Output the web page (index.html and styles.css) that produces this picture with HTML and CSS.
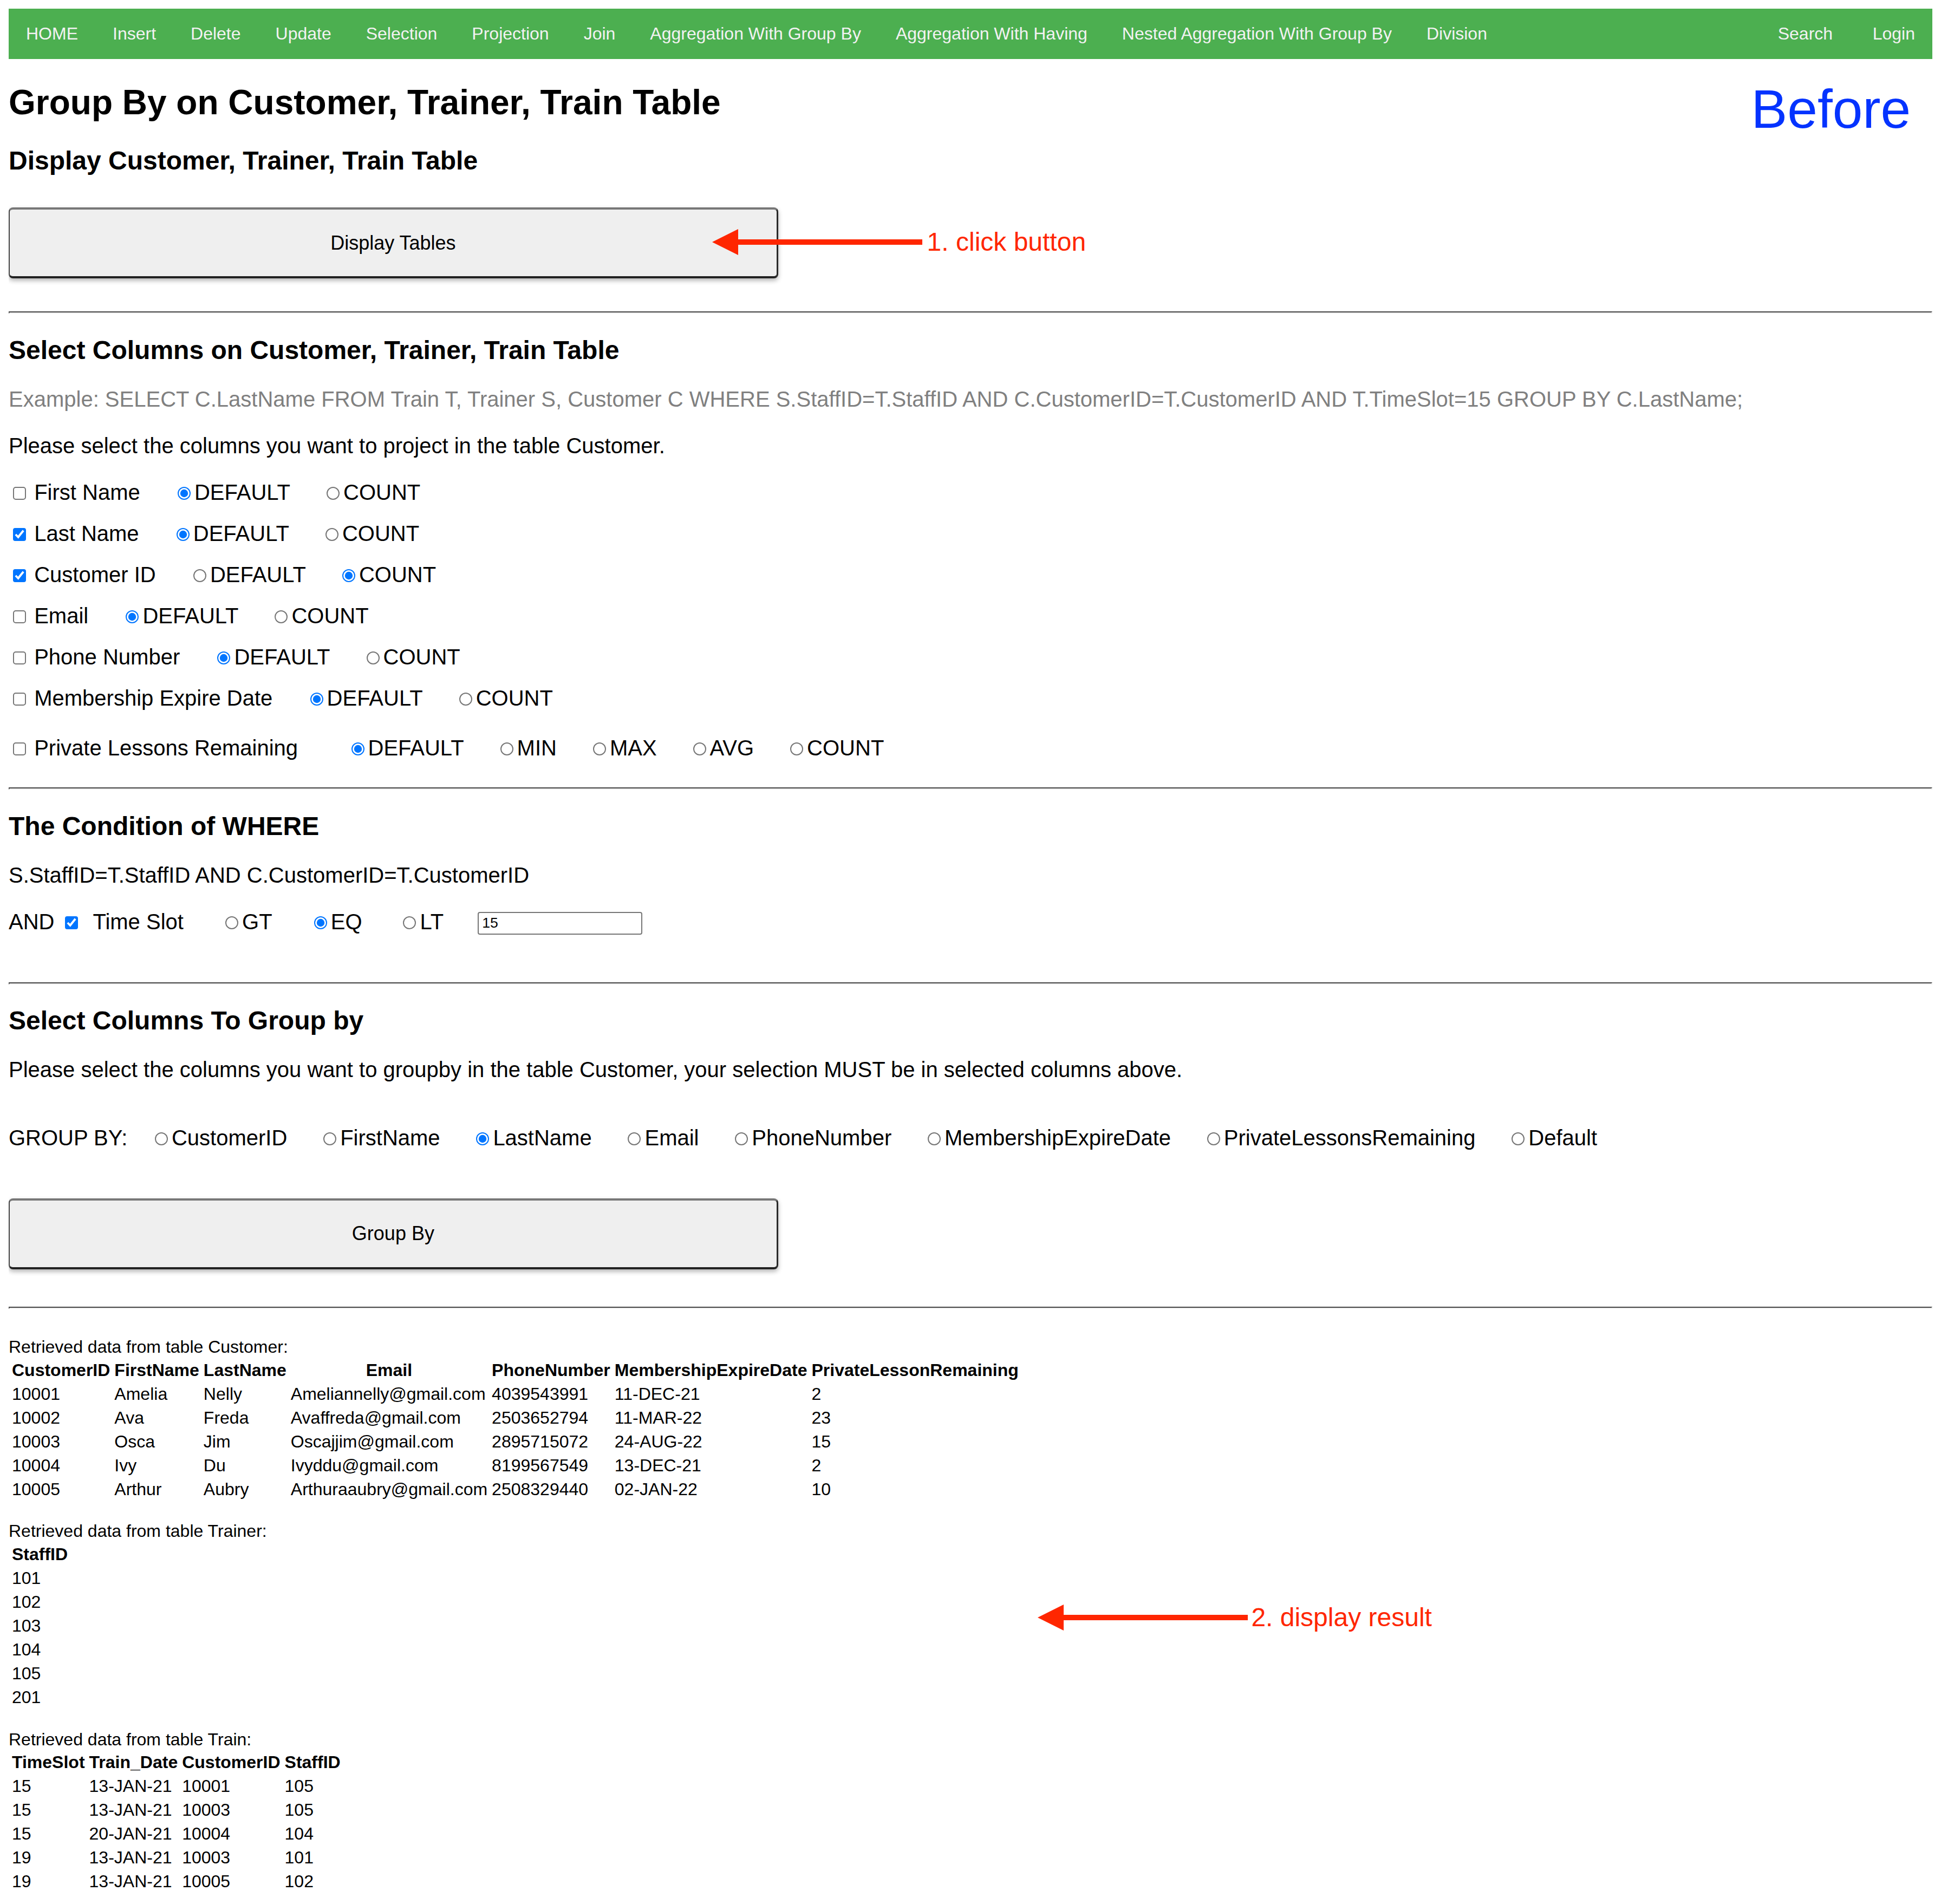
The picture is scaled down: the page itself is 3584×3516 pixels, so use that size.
FILE: index.html
```html
<!DOCTYPE html>
<html lang="en">
<head>
<meta charset="utf-8">
<title>Group By</title>
<link rel="stylesheet" href="styles.css">
</head>
<body>
<nav class="topnav">
  <div class="nav-group">
    <a href="#">HOME</a>
    <a href="#">Insert</a>
    <a href="#">Delete</a>
    <a href="#">Update</a>
    <a href="#">Selection</a>
    <a href="#">Projection</a>
    <a href="#">Join</a>
    <a href="#">Aggregation With Group By</a>
    <a href="#">Aggregation With Having</a>
    <a href="#">Nested Aggregation With Group By</a>
    <a href="#">Division</a>
  </div>
  <div class="nav-group">
    <a href="#" class="nav-search">Search</a>
    <a href="#">Login</a>
  </div>
</nav>

<div class="before">Before</div>

<h1>Group By on Customer, Trainer, Train Table</h1>
<h2>Display Customer, Trainer, Train Table</h2>
<div class="btn-wrap btn-wrap1"><button class="action">Display Tables</button></div>

<div class="note note1">
  <svg width="194" height="24" viewBox="0 0 194 24"><polygon points="0,12 24,0 24,24" fill="#ff2600"/><rect x="22" y="9.5" width="172" height="5" fill="#ff2600"/></svg>
  <span class="note-text">1. click button</span>
</div>

<hr class="hr1">

<h2>Select Columns on Customer, Trainer, Train Table</h2>
<p class="big example">Example: SELECT C.LastName FROM Train T, Trainer S, Customer C WHERE S.StaffID=T.StaffID AND C.CustomerID=T.CustomerID AND T.TimeSlot=15 GROUP BY C.LastName;</p>
<p class="big">Please select the columns you want to project in the table Customer.</p>

<div class="row"><input type="checkbox" class="cb"><span>First Name</span><label class="opt first"><input type="radio" name="c1" checked>DEFAULT</label><label class="opt"><input type="radio" name="c1">COUNT</label></div>
<div class="row"><input type="checkbox" class="cb" checked><span>Last Name</span><label class="opt first"><input type="radio" name="c2" checked>DEFAULT</label><label class="opt"><input type="radio" name="c2">COUNT</label></div>
<div class="row"><input type="checkbox" class="cb" checked><span>Customer ID</span><label class="opt first"><input type="radio" name="c3">DEFAULT</label><label class="opt"><input type="radio" name="c3" checked>COUNT</label></div>
<div class="row"><input type="checkbox" class="cb"><span>Email</span><label class="opt first"><input type="radio" name="c4" checked>DEFAULT</label><label class="opt"><input type="radio" name="c4">COUNT</label></div>
<div class="row"><input type="checkbox" class="cb"><span>Phone Number</span><label class="opt first"><input type="radio" name="c5" checked>DEFAULT</label><label class="opt"><input type="radio" name="c5">COUNT</label></div>
<div class="row"><input type="checkbox" class="cb"><span>Membership Expire Date</span><label class="opt first"><input type="radio" name="c6" checked>DEFAULT</label><label class="opt"><input type="radio" name="c6">COUNT</label></div>
<div class="row row-last"><input type="checkbox" class="cb"><span>Private Lessons Remaining</span><label class="opt wide"><input type="radio" name="c7" checked>DEFAULT</label><label class="opt more"><input type="radio" name="c7">MIN</label><label class="opt more"><input type="radio" name="c7">MAX</label><label class="opt more"><input type="radio" name="c7">AVG</label><label class="opt more"><input type="radio" name="c7">COUNT</label></div>

<hr class="hr2">

<h2>The Condition of WHERE</h2>
<p class="big">S.StaffID=T.StaffID AND C.CustomerID=T.CustomerID</p>
<div class="row where-row"><span>AND</span><input type="checkbox" class="cb-and" checked><span>Time Slot</span><label class="opt cond"><input type="radio" name="w">GT</label><label class="opt cond"><input type="radio" name="w" checked>EQ</label><label class="opt cond2"><input type="radio" name="w">LT</label><input type="text" class="slot" value="15"></div>

<hr class="hr3">

<h2>Select Columns To Group by</h2>
<p class="big">Please select the columns you want to groupby in the table Customer, your selection MUST be in selected columns above.</p>
<div class="row group-row"><span>GROUP BY:</span><label class="opt gfirst"><input type="radio" name="g">CustomerID</label><label class="opt gnext"><input type="radio" name="g">FirstName</label><label class="opt gnext"><input type="radio" name="g" checked>LastName</label><label class="opt gnext"><input type="radio" name="g">Email</label><label class="opt gnext"><input type="radio" name="g">PhoneNumber</label><label class="opt gnext"><input type="radio" name="g">MembershipExpireDate</label><label class="opt gnext"><input type="radio" name="g">PrivateLessonsRemaining</label><label class="opt gnext"><input type="radio" name="g">Default</label></div>
<div class="btn-wrap btn-wrap2"><button class="action">Group By</button></div>

<hr class="hr4">

<div class="results">
  <div class="cap">Retrieved data from table Customer:</div>
  <table>
    <tr><th>CustomerID</th><th>FirstName</th><th>LastName</th><th>Email</th><th>PhoneNumber</th><th>MembershipExpireDate</th><th>PrivateLessonRemaining</th></tr>
    <tr><td>10001</td><td>Amelia</td><td>Nelly</td><td>Ameliannelly@gmail.com</td><td>4039543991</td><td>11-DEC-21</td><td>2</td></tr>
    <tr><td>10002</td><td>Ava</td><td>Freda</td><td>Avaffreda@gmail.com</td><td>2503652794</td><td>11-MAR-22</td><td>23</td></tr>
    <tr><td>10003</td><td>Osca</td><td>Jim</td><td>Oscajjim@gmail.com</td><td>2895715072</td><td>24-AUG-22</td><td>15</td></tr>
    <tr><td>10004</td><td>Ivy</td><td>Du</td><td>Ivyddu@gmail.com</td><td>8199567549</td><td>13-DEC-21</td><td>2</td></tr>
    <tr><td>10005</td><td>Arthur</td><td>Aubry</td><td>Arthuraaubry@gmail.com</td><td>2508329440</td><td>02-JAN-22</td><td>10</td></tr>
  </table>

  <div class="cap cap-gap">Retrieved data from table Trainer:</div>
  <table>
    <tr><th>StaffID</th></tr>
    <tr><td>101</td></tr>
    <tr><td>102</td></tr>
    <tr><td>103</td></tr>
    <tr><td>104</td></tr>
    <tr><td>105</td></tr>
    <tr><td>201</td></tr>
  </table>

  <div class="cap cap-gap">Retrieved data from table Train:</div>
  <table>
    <tr><th>TimeSlot</th><th>Train_Date</th><th>CustomerID</th><th>StaffID</th></tr>
    <tr><td>15</td><td>13-JAN-21</td><td>10001</td><td>105</td></tr>
    <tr><td>15</td><td>13-JAN-21</td><td>10003</td><td>105</td></tr>
    <tr><td>15</td><td>20-JAN-21</td><td>10004</td><td>104</td></tr>
    <tr><td>19</td><td>13-JAN-21</td><td>10003</td><td>101</td></tr>
    <tr><td>19</td><td>13-JAN-21</td><td>10005</td><td>102</td></tr>
  </table>
</div>

<div class="note note2">
  <svg width="194" height="24" viewBox="0 0 194 24"><polygon points="0,12 24,0 24,24" fill="#ff2600"/><rect x="22" y="9.5" width="172" height="5" fill="#ff2600"/></svg>
  <span class="note-text note-text2">2. display result</span>
</div>
</body>
</html>
```

FILE: styles.css
```css
html {
  zoom: 2;
}

body {
  margin: 8px;
  font-family: "Liberation Sans", Arial, Helvetica, sans-serif;
  color: #000;
  background: #fff;
}

/* ---------- top navigation ---------- */
.topnav {
  display: flex;
  justify-content: space-between;
  background: #4caf50;
}

.nav-group {
  display: flex;
}

.topnav a {
  display: block;
  padding: 14px 16px;
  color: #f2f2f2;
  font-size: 16px;
  line-height: 18.4px;
  text-decoration: none;
}

.topnav a.nav-search {
  padding-right: 20.8px;
  padding-left: 17px;
}

/* ---------- headings ---------- */
h1 {
  font-size: 32px;
  font-weight: bold;
  margin: 21.44px 0;
}

h2 {
  font-size: 24px;
  font-weight: bold;
  margin: 19.92px 0;
}

.before {
  position: absolute;
  left: 1616.8px;
  top: 72px;
  font-size: 50px;
  color: #0433ff;
  line-height: 57.5px;
}

/* ---------- buttons ---------- */
.btn-wrap1 {
  margin-top: 29.9px;
}

.btn-wrap2 {
  margin-top: 44.3px;
}

.action {
  display: block;
  box-sizing: border-box;
  width: 40%;
  height: 65.5px;
  padding: 0;
  font: 18px "Liberation Sans", Arial, Helvetica, sans-serif;
  color: #000;
  background: #efefef;
  border-style: solid;
  border-width: 2px 1.5px 2px 1px;
  border-color: #777 #2a2a2a #222 #444;
  border-radius: 4px;
  box-shadow: 0 2px 4px rgba(0, 0, 0, 0.3);
}

/* ---------- rules ---------- */
hr {
  margin: 0;
  border: 1px inset;
  border-color: #9a9a9a #eeeeee #eeeeee #9a9a9a;
  height: 0;
}

.hr1 { margin-top: 30.2px; }
.hr2 { margin-top: 25.3px; }
.hr3 { margin-top: 44.3px; }
.hr4 { margin-top: 34.6px; }

/* ---------- text blocks ---------- */
.big {
  font-size: 20px;
  line-height: 23px;
  margin: 20px 0;
}

.example {
  color: #808080;
}

/* ---------- option rows ---------- */
.row {
  font-size: 20px;
  line-height: 23px;
  height: 23px;
  margin-bottom: 15px;
  white-space: nowrap;
}

.row-last {
  margin-top: 23px;
  margin-bottom: 0;
}

.row input[type="checkbox"],
.row input[type="radio"] {
  width: 12px;
  height: 12px;
  vertical-align: baseline;
}

.cb {
  margin: 0 7.8px 0 3.8px;
}

.opt input[type="radio"] {
  margin: 0 3.5px 0 0;
}

.opt { margin-left: 33.5px; }
.opt.first { margin-left: 34.6px; }
.opt.wide { margin-left: 49.2px; }
.opt.more { margin-left: 33.5px; }

.where-row {
  margin-bottom: 0;
}

.cb-and {
  margin: 0 13.9px 0 9.6px;
}

.opt.cond { margin-left: 38.6px; }
.opt.cond2 { margin-left: 37.9px; }

.slot {
  box-sizing: border-box;
  width: 152px;
  height: 21px;
  margin: 2.3px 0 0 31.5px;
  padding: 1px 3px;
  font: 13.33px "Liberation Sans", Arial, Helvetica, sans-serif;
  color: #000;
  border: 1px solid #767676;
  border-radius: 2px;
  vertical-align: top;
}

.group-row {
  margin-top: 39.8px;
  margin-bottom: 0;
}

.opt.gfirst { margin-left: 25.3px; }
.opt.gnext { margin-left: 33.4px; }

/* ---------- results ---------- */
.results {
  margin-top: 26px;
  font-size: 16px;
}

.cap {
  line-height: 18.4px;
}

.cap-gap {
  margin-top: 17.8px;
}

table {
  border-spacing: 2px;
  font-size: 16px;
}

th,
td {
  padding: 1px;
  line-height: 18px;
}

th {
  font-weight: bold;
  text-align: center;
}

td {
  text-align: left;
}

/* ---------- annotations ---------- */
.note {
  position: absolute;
  display: flex;
  align-items: center;
  height: 24px;
  white-space: nowrap;
}

.note svg {
  display: block;
  flex: none;
}

.note1 {
  left: 657.5px;
  top: 211.3px;
}

.note2 {
  left: 957.8px;
  top: 1481.6px;
}

.note-text {
  margin-left: 4.3px;
  font-size: 24px;
  line-height: 1;
  color: #ff2600;
}

.note-text2 {
  margin-left: 3.4px;
  font-size: 24px;
}
```
